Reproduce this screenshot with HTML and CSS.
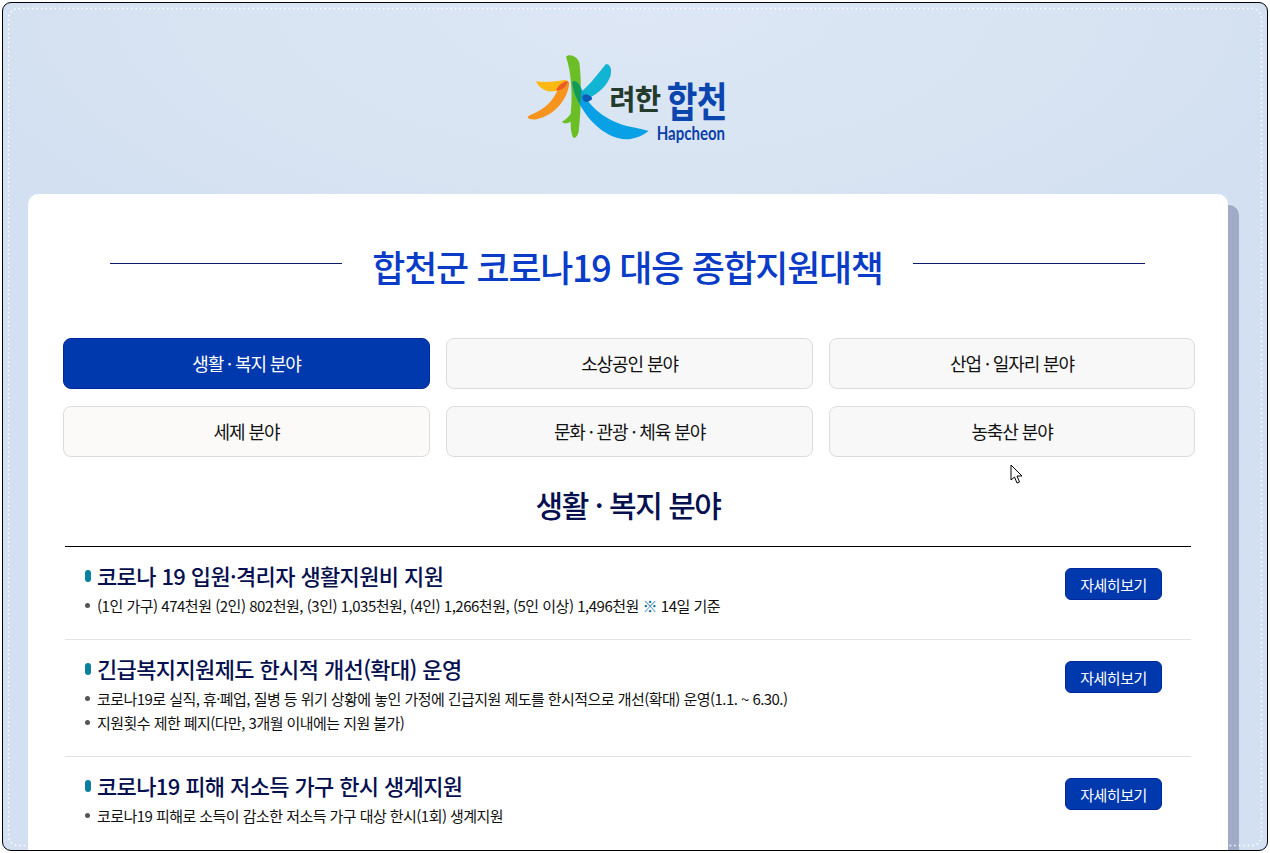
FILE: index.html
```html
<!DOCTYPE html>
<html lang="ko">
<head>
<meta charset="utf-8">
<title>합천군 코로나19 대응 종합지원대책</title>
<link rel="stylesheet" href="styles.css">
</head>
<body>
<div class="frame">
  <header class="top">
    <svg class="logo" width="250" height="110" viewBox="0 0 750 330">
      <path d="M107 124 C140 128 170 124 192 120 C200 119 205 124 200 132 C190 148 165 158 140 153 C125 148 115 138 107 124Z" fill="#fdb813"/>
      <path d="M205 125 C208 125 208 130 207 136 C200 180 165 225 110 238 C98 240 85 238 83 232 C85 225 100 222 112 215 C145 200 165 170 172 150 C180 140 195 128 205 125Z" fill="#f7941d"/>
      <path d="M168 150 C175 135 190 125 203 122 C205 125 200 135 190 145 C183 150 175 152 168 150Z" fill="#ee5a24"/>
      <path d="M198 50 C210 40 232 50 238 68 C244 110 245 200 236 275 C232 292 222 298 218 290 C212 275 212 260 212 245 C205 250 192 252 186 245 C195 240 205 232 212 222 C218 170 215 100 198 50Z" fill="#6cbe26"/>
      <path d="M318 72 C330 72 335 85 333 100 C328 135 290 165 262 176 C255 170 248 162 243 155 C270 135 295 100 318 72Z" fill="#11b5d3"/>
      <path d="M218 125 C228 120 240 132 245 148 C262 190 300 235 380 258 C405 263 430 268 446 273 C430 285 405 298 378 298 C320 295 265 245 235 185 C224 165 215 140 218 125Z" fill="#0aa0e6"/>
      <path d="M218 125 C228 120 240 132 243 150 C243 165 243 180 240 192 C228 172 215 140 218 125Z" fill="#149b4f"/>
      <path d="M247 170 C252 160 262 160 275 172 C280 178 270 185 258 186 C250 183 246 178 247 170Z" fill="#0b5bb7"/>
      <text class="logo-a" x="328" y="210">려한</text>
      <text class="logo-b" transform="translate(500 232) scale(1 1.22)">합천</text>
      <text class="logo-c" x="470" y="299" textLength="205" lengthAdjust="spacingAndGlyphs">Hapcheon</text>
    </svg>
  </header>
  <main class="card">
    <h1 class="heading"><span class="rule"></span><span class="heading-text">합천군 코로나19 대응 종합지원대책</span><span class="rule"></span></h1>
    <nav class="tabs">
      <a class="tab active">생활 · 복지 분야</a>
      <a class="tab">소상공인 분야</a>
      <a class="tab">산업 · 일자리 분야</a>
      <a class="tab warm">세제 분야</a>
      <a class="tab">문화 · 관광 · 체육 분야</a>
      <a class="tab">농축산 분야</a>
    </nav>
    <h2 class="section">생활 · 복지 분야</h2>
    <ul class="items">
      <li class="item">
        <div class="body">
          <h3 class="item-title">코로나 19 입원·격리자 생활지원비 지원</h3>
          <ul class="points">
            <li class="wide">(1인 가구) 474천원 (2인) 802천원, (3인) 1,035천원, (4인) 1,266천원, (5인 이상) 1,496천원 <b class="mark">※</b> 14일 기준</li>
          </ul>
        </div>
        <a class="more">자세히보기</a>
      </li>
      <li class="item">
        <div class="body">
          <h3 class="item-title">긴급복지지원제도 한시적 개선(확대) 운영</h3>
          <ul class="points">
            <li>코로나19로 실직, 휴·폐업, 질병 등 위기 상황에 놓인 가정에 긴급지원 제도를 한시적으로 개선(확대) 운영(1.1. ~ 6.30.)</li>
            <li>지원횟수 제한 폐지(다만, 3개월 이내에는 지원 불가)</li>
          </ul>
        </div>
        <a class="more">자세히보기</a>
      </li>
      <li class="item">
        <div class="body">
          <h3 class="item-title">코로나19 피해 저소득 가구 한시 생계지원</h3>
          <ul class="points">
            <li>코로나19 피해로 소득이 감소한 저소득 가구 대상 한시(1회) 생계지원</li>
          </ul>
        </div>
        <a class="more">자세히보기</a>
      </li>
    </ul>
    <svg class="cursor" width="14" height="21" viewBox="0 0 14 21">
      <path d="M1 1 L1 16 L4.500 13 L7 19 L9.500 18 L7 12 L12 12 Z" fill="#fff" stroke="#000" stroke-width="1"/>
    </svg>
  </main>
  <svg class="dots" width="1264" height="847" viewBox="0 0 1264 847">
    <rect x="5.500" y="5.500" width="1253" height="837" rx="10" fill="none" stroke="#fff" stroke-width="1.500" stroke-dasharray="1.500 3"/>
  </svg>
</div>
</body>
</html>
```
FILE: styles.css
```css
* { box-sizing: border-box; }
html, body { margin: 0; padding: 0; background: #fff; }
body {
  width: 1270px;
  height: 853px;
  overflow: hidden;
  padding: 2px;
  font-family: "Noto Sans CJK KR", "Noto Sans", sans-serif;
  color: #111;
}
.frame {
  position: relative;
  width: 1266px;
  height: 849px;
  border: 1px solid #000;
  border-radius: 9px;
  overflow: hidden;
  background: radial-gradient(ellipse 700px 300px at 50% 0, #dde7f5 0%, #d8e4f2 60%, #d3e0f1 100%), #d4e1f1;
}
.dots { position: absolute; left: 0; top: 0; pointer-events: none; }
.top {
  height: 191px;
  display: flex;
  justify-content: center;
  padding-top: 37px;
}
.logo { display: block; margin-right: 20px; }
.logo-a { font-size: 86px; font-weight: 700; fill: #233a2c; letter-spacing: -3px; }
.logo-b { font-size: 100px; font-weight: 700; fill: #0b45ae; letter-spacing: -2px; }
.logo-c { font-size: 54px; font-weight: 700; fill: #0b3fa8; font-family: "Lato", sans-serif; }
.card {
  position: relative;
  margin-left: 25px;
  width: 1200px;
  height: 700px;
  background: #fff;
  border-radius: 10px;
  box-shadow: 11px 11px 0 #a0acc7;
  padding: 40px 35px 0;
}
.heading {
  margin: 0 0 0 47px;
  width: 1035px;
  height: 70px;
  display: flex;
  align-items: center;
  justify-content: space-between;
  font-size: 36px;
  font-weight: 500;
  line-height: 70px;
  color: #0a3cc8;
  letter-spacing: -1.300px;
}
.rule { display: block; flex: none; width: 232px; height: 1px; background: #0a1a6e; margin-top: -11px; }
.heading-text { white-space: nowrap; margin-top: -6px; }
.tabs {
  margin-top: 34px;
  display: grid;
  grid-template-columns: 367px 367px 366px;
  grid-auto-rows: 51px;
  column-gap: 16px;
  row-gap: 17px;
}
.tab {
  display: flex;
  align-items: center;
  justify-content: center;
  padding-bottom: 1px;
  border: 1px solid #dcdcdc;
  border-radius: 8px;
  background: #f8f8f8;
  font-size: 18px;
  letter-spacing: -1.100px;
  color: #111;
}
.tab.warm { background: #fbfaf9; }
.tab.active { background: #0038ae; border-color: #00289a; color: #fff; }
.section {
  margin: 25px 0 0 0;
  height: 45px;
  text-align: center;
  font-size: 30px;
  line-height: 45px;
  font-weight: 500;
  letter-spacing: -1.500px;
  color: #06104f;
}
.items {
  list-style: none;
  margin: 19px 0 0 2px;
  padding: 0;
  width: 1126px;
  border-top: 1px solid #000;
}
.item {
  display: flex;
  justify-content: space-between;
  padding: 13px 29px 21px 20px;
  border-bottom: 1px solid #e2e2e2;
}
.item:last-child { border-bottom: 0; }
.item-title {
  margin: 0;
  position: relative;
  padding-left: 12px;
  font-size: 22px;
  line-height: 30px;
  font-weight: 500;
  letter-spacing: -.62px;
  color: #06104f;
}
.item-title::before {
  content: "";
  position: absolute;
  left: 0;
  top: 10px;
  width: 6px;
  height: 12px;
  border-radius: 3px;
  background: #0a809f;
}
.points { list-style: none; margin: 3px 0 0; padding: 0; }
.points li {
  position: relative;
  padding-left: 12px;
  font-size: 15px;
  line-height: 25px;
  letter-spacing: -.55px;
  color: #111;
}
.points li + li { margin-top: -1px; }
.points li.wide { letter-spacing: -.49px; }
.points li::before {
  content: "";
  position: absolute;
  left: 0;
  top: 10px;
  width: 5px;
  height: 5px;
  border-radius: 50%;
  background: #555;
}
.mark { color: #0a6a9a; font-weight: 700; }
.more {
  flex: none;
  margin-top: 8px;
  width: 97px;
  height: 32px;
  display: flex;
  align-items: center;
  justify-content: center;
  background: #0038ae;
  border: 1px solid #00289a;
  border-radius: 6px;
  color: #fff;
  font-size: 15px;
  letter-spacing: -.5px;
}
.cursor { position: absolute; left: 982px; top: 270px; }
```
